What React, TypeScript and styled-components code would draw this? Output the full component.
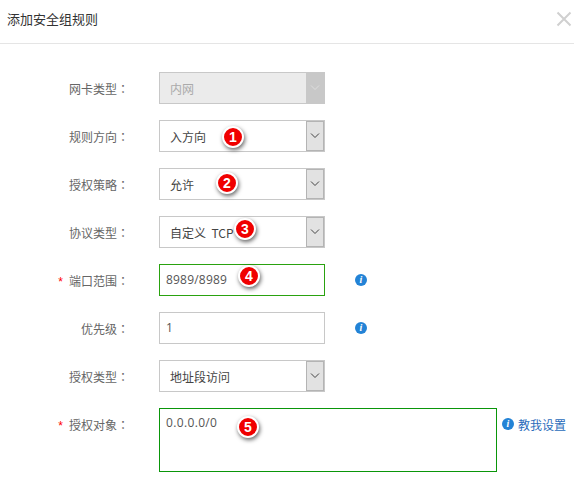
import React from "react";
import styled, { createGlobalStyle, css } from "styled-components";

const Global = createGlobalStyle`
  html, body { margin: 0; padding: 0; background: #fff; }
  body { font-family: "Noto Sans CJK SC", "Open Sans", sans-serif; font-size: 12px; color: #555; }
`;

const Dialog = styled.div`
  width: 574px;
  height: 480px;
  overflow: hidden;
  position: relative;
`;

const Header = styled.header`
  border-bottom: 1px solid #e5e5e5;
  display: flex;
  align-items: center;
  justify-content: space-between;
  padding: 0 1px 6px 7px;
  box-sizing: border-box;
  height: 44px;
`;

const Title = styled.h1`
  margin: 0;
  font-size: 13px;
  line-height: 20px;
  font-weight: 400;
  color: #333;
`;

const CloseIcon = styled.svg`
  width: 16px;
  height: 16px;
  stroke: #d0d0d0;
  stroke-width: 2;
  fill: none;
  margin-right: 1px;
`;

const Form = styled.form`
  display: flex;
  flex-direction: column;
  gap: 16px;
  padding-top: 28px;
`;

const Row = styled.div`
  display: flex;
  align-items: flex-start;
`;

const Label = styled.label`
  width: 129px;
  height: 32px;
  line-height: 34px;
  margin-right: 30px;
  text-align: right;
  color: #666;
  white-space: nowrap;
  flex: none;
`;

const Colon = styled.span`
  font-family: "Noto Sans CJK TC", sans-serif;
`;

const Required = styled.span`
  color: #f00;
  margin-right: 6px;
  font-family: "Liberation Sans", sans-serif;
`;

const SelectBox = styled.div<{ $disabled?: boolean }>`
  position: relative;
  width: 166px;
  height: 32px;
  box-sizing: border-box;
  border: 1px solid #c8c8c8;
  display: flex;
  align-items: center;
  justify-content: space-between;
  padding-left: 10px;
  color: #444;
  ${(p) =>
    p.$disabled &&
    css`
      background: #ebebeb;
      color: #aaa;
    `}
`;

const SelectText = styled.span`
  white-space: pre;
`;

const Arrow = styled.span<{ $disabled?: boolean }>`
  width: 18px;
  height: 30px;
  box-sizing: border-box;
  border: 1px solid #b4b4b4;
  background: #e2e2e2;
  display: flex;
  align-items: center;
  justify-content: center;
  ${(p) =>
    p.$disabled &&
    css`
      background: #c8c8c8;
      border-color: #c8c8c8;
    `}
`;

const Chevron = styled.svg<{ $disabled?: boolean }>`
  width: 10px;
  height: 6px;
  fill: none;
  stroke: ${(p) => (p.$disabled ? "#ddd" : "#444")};
  stroke-width: 1;
`;

const InputBox = styled.div<{ $valid?: boolean }>`
  position: relative;
  width: 166px;
  height: 32px;
  box-sizing: border-box;
  border: 1px solid ${(p) => (p.$valid ? "#2aa20f" : "#c8c8c8")};
  padding-left: 6px;
  line-height: 30px;
  color: #555;
  font-family: "Open Sans", sans-serif;
  letter-spacing: 0.2px;
`;

const TextBox = styled.div`
  position: relative;
  width: 338px;
  height: 64px;
  box-sizing: border-box;
  border: 1px solid #0a960a;
  padding: 5px 6px;
  line-height: 18px;
  color: #555;
  font-family: "Open Sans", sans-serif;
  letter-spacing: 0.35px;
`;

const Badge = styled.span<{ $x: number; $y: number }>`
  position: absolute;
  left: ${(p) => p.$x - 11}px;
  top: ${(p) => p.$y - 11}px;
  width: 22px;
  height: 22px;
  box-sizing: border-box;
  border-radius: 50%;
  background: #f00000;
  border: 2px solid #fff;
  box-shadow: 1px 2px 4px rgba(0, 0, 0, 0.6);
  color: #fff;
  font: 700 14px/18px "Liberation Sans", sans-serif;
  letter-spacing: 0;
  text-align: center;
`;

const InfoCircle = styled.span`
  width: 12px;
  height: 12px;
  border-radius: 50%;
  background: #2383d6;
  color: #fff;
  font: italic 700 10px/12px "Liberation Serif", serif;
  text-align: center;
  flex: none;
`;

const Hint = styled.span`
  display: flex;
  align-items: center;
  height: 32px;
  margin-left: 30px;
`;

const HelpLink = styled.a`
  display: flex;
  align-items: center;
  gap: 4px;
  height: 32px;
  margin-left: 5px;
  color: #2a6cbb;
  white-space: nowrap;
`;

const Arrowhead = ({ disabled }: { disabled?: boolean }) => (
  <Chevron $disabled={disabled} viewBox="0 0 10 6">
    <path d="M1 0.5 L5 4.5 L9 0.5" />
  </Chevron>
);

export default function App() {
  return (
    <Dialog>
      <Global />
      <Header>
        <Title>添加安全组规则</Title>
        <CloseIcon viewBox="0 0 16 16">
          <path d="M1.5 1.5 L14.5 14.5 M14.5 1.5 L1.5 14.5" />
        </CloseIcon>
      </Header>
      <Form>
        <Row>
          <Label>网卡类型<Colon>：</Colon></Label>
          <SelectBox $disabled>
            <SelectText>内网</SelectText>
            <Arrow $disabled>
              <Arrowhead disabled />
            </Arrow>
          </SelectBox>
        </Row>
        <Row>
          <Label>规则方向<Colon>：</Colon></Label>
          <SelectBox>
            <SelectText>入方向</SelectText>
            <Arrow>
              <Arrowhead />
            </Arrow>
            <Badge $x={73} $y={16}>1</Badge>
          </SelectBox>
        </Row>
        <Row>
          <Label>授权策略<Colon>：</Colon></Label>
          <SelectBox>
            <SelectText>允许</SelectText>
            <Arrow>
              <Arrowhead />
            </Arrow>
            <Badge $x={67} $y={14}>2</Badge>
          </SelectBox>
        </Row>
        <Row>
          <Label>协议类型<Colon>：</Colon></Label>
          <SelectBox>
            <SelectText>自定义  TCP</SelectText>
            <Arrow>
              <Arrowhead />
            </Arrow>
            <Badge $x={85} $y={12}>3</Badge>
          </SelectBox>
        </Row>
        <Row>
          <Label>
            <Required>*</Required>端口范围<Colon>：</Colon>
          </Label>
          <InputBox $valid>
            8989/8989
            <Badge $x={89} $y={11}>4</Badge>
          </InputBox>
          <Hint>
            <InfoCircle>i</InfoCircle>
          </Hint>
        </Row>
        <Row>
          <Label>优先级<Colon>：</Colon></Label>
          <InputBox>1</InputBox>
          <Hint>
            <InfoCircle>i</InfoCircle>
          </Hint>
        </Row>
        <Row>
          <Label>授权类型<Colon>：</Colon></Label>
          <SelectBox>
            <SelectText>地址段访问</SelectText>
            <Arrow>
              <Arrowhead />
            </Arrow>
          </SelectBox>
        </Row>
        <Row>
          <Label>
            <Required>*</Required>授权对象<Colon>：</Colon>
          </Label>
          <TextBox>
            0.0.0.0/0
            <Badge $x={88} $y={18}>5</Badge>
          </TextBox>
          <HelpLink>
            <InfoCircle>i</InfoCircle>
            教我设置
          </HelpLink>
        </Row>
      </Form>
    </Dialog>
  );
}
